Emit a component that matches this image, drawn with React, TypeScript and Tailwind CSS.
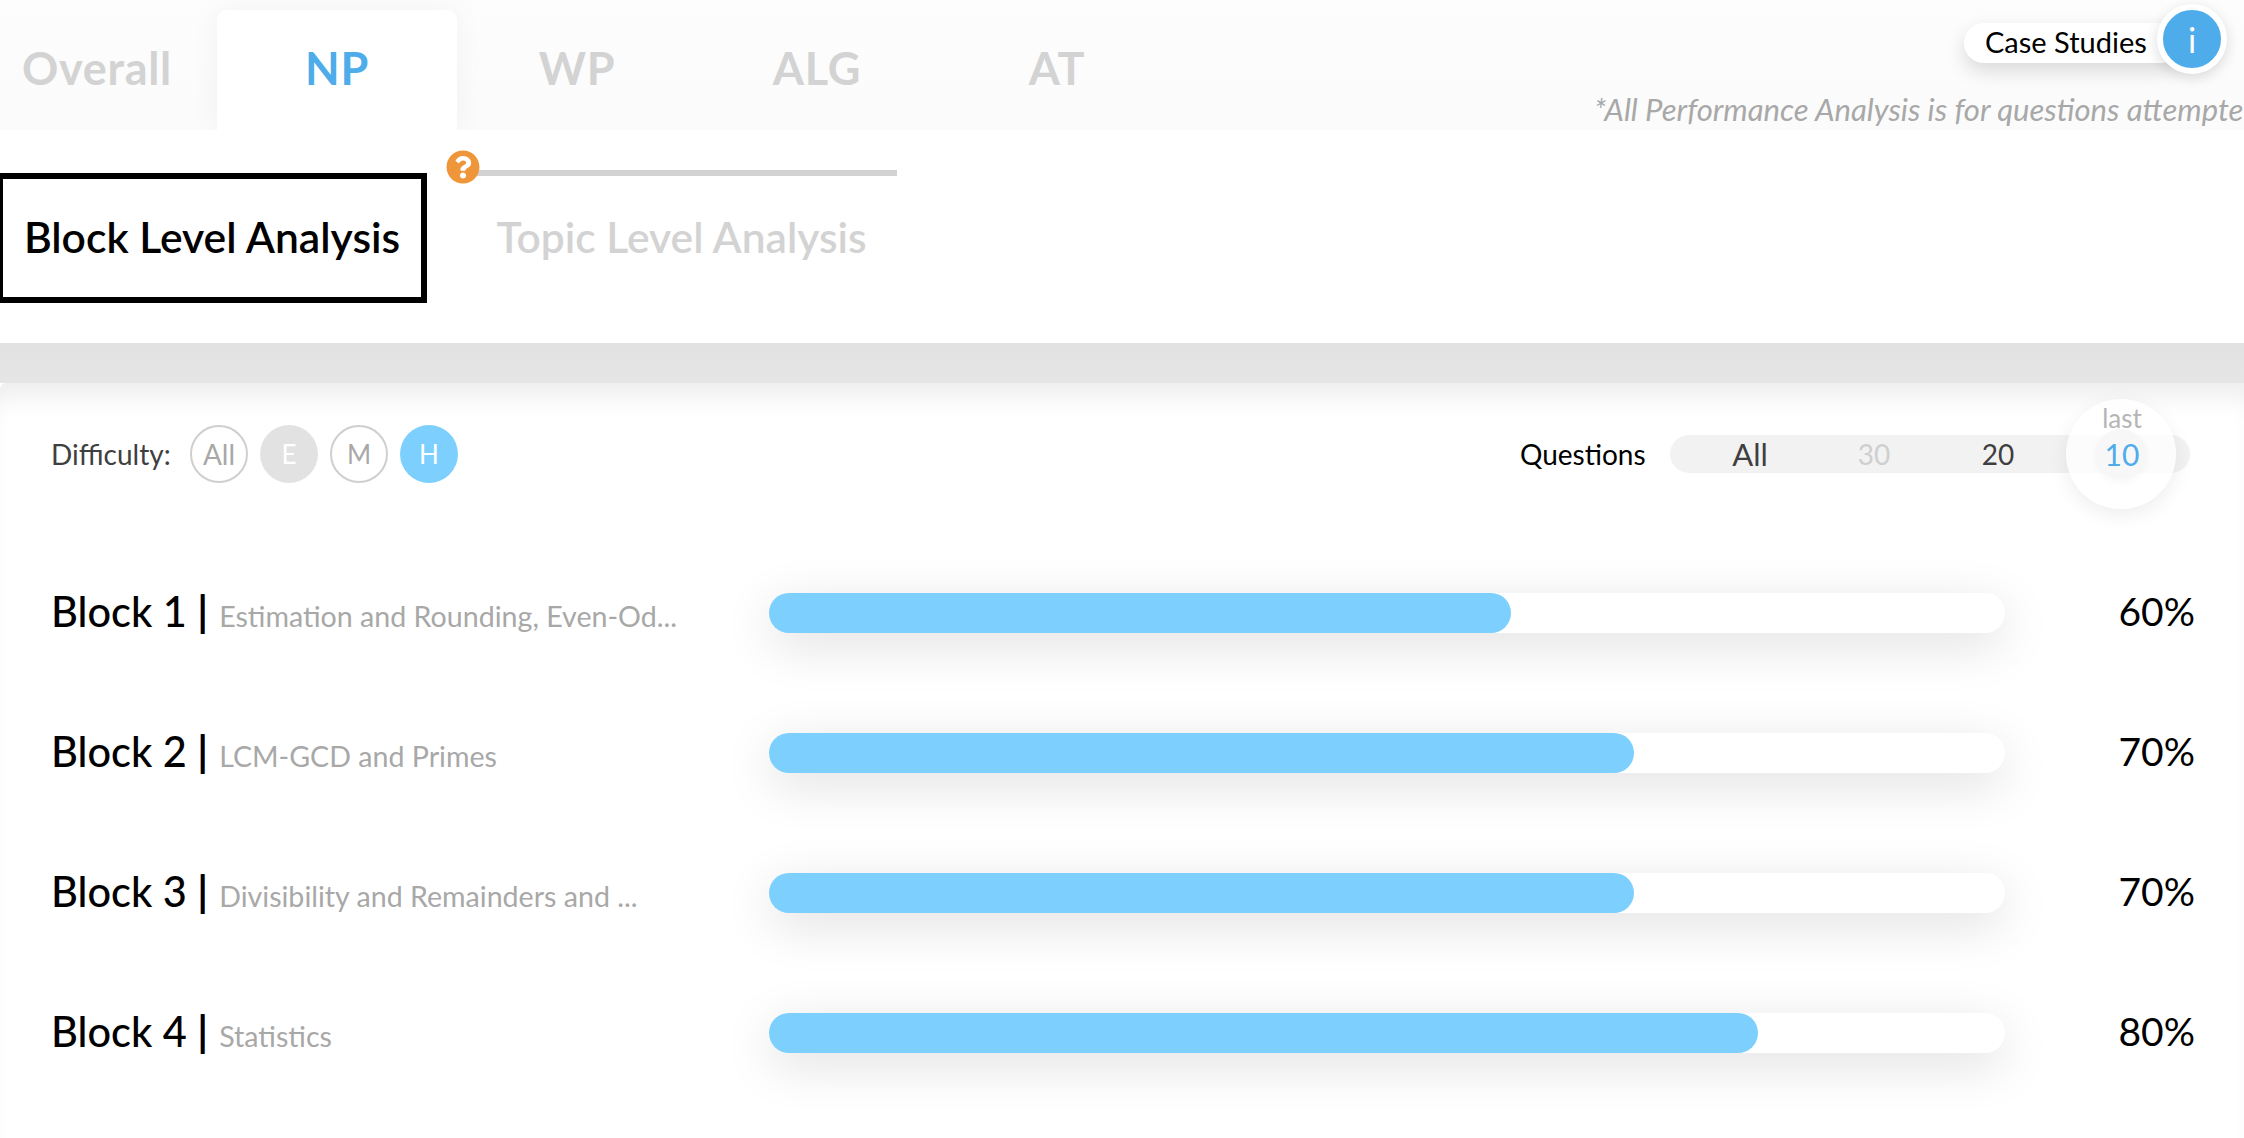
import React from "react";
import { FaQuestionCircle } from "react-icons/fa";

const tabs = ["Overall", "NP", "WP", "ALG", "AT"];
const blocks = [
  { name: "Block 1", topic: "Estimation and Rounding, Even-Od...", value: 60 },
  { name: "Block 2", topic: "LCM-GCD and Primes", value: 70 },
  { name: "Block 3", topic: "Divisibility and Remainders and ...", value: 70 },
  { name: "Block 4", topic: "Statistics", value: 80 },
];

export default function App() {
  return (
    <div className="flex h-[1138px] w-[2244px] flex-col overflow-hidden bg-white font-['Lato',sans-serif]">
      <header className="flex h-[130px] shrink-0 bg-gradient-to-b from-[#fdfdfd] to-[#fbfbfb]">
        <nav className="-ml-[23px] flex shrink-0 pt-[10px]">
          {tabs.map((t) => (
            <div
              key={t}
              className={
                t === "NP"
                  ? "flex h-[120px] w-[240px] items-center justify-center rounded-t-[10px] bg-white pb-[3px] text-[45px] font-bold tracking-[0.7px] text-[#4eacea] shadow-[0_0_30px_rgba(0,0,0,0.05)]"
                  : "flex h-[120px] w-[240px] items-center justify-center pb-[3px] text-[45px] font-bold tracking-[0.7px] text-[#d3d3d3]"
              }
            >
              {t}
            </div>
          ))}
        </nav>
        <div className="relative min-w-0 flex-1">
          <div className="flex justify-end pr-[17px] pt-[4px]">
            <div className="flex items-center">
              <div className="-mr-[24px] mt-[8px] flex h-[40px] w-[217px] items-center rounded-full bg-white pb-[2px] pl-[21px] text-[29px] text-black shadow-[0_8px_20px_rgba(0,0,0,0.14)]">
                Case Studies
              </div>
              <div className="relative flex h-[70px] w-[70px] items-center justify-center rounded-full border-[6px] border-white bg-[#4eaceb] text-[34px] text-white shadow-[0_4px_14px_rgba(0,0,0,0.14)]">
                i
              </div>
            </div>
          </div>
          <p className="ml-[417px] mt-[15px] whitespace-nowrap text-[31px] leading-[40px] italic text-[#a8a8a8]">
            *All Performance Analysis is for questions attempted
          </p>
        </div>
      </header>

      <section className="flex h-[213px] shrink-0 items-start bg-white pt-[43px]">
        <div className="-ml-[3px] flex h-[130px] w-[430px] shrink-0 items-center justify-center border-[6px] border-black bg-white pb-[3px] text-[42.6px] font-semibold text-black">
          Block Level Analysis
        </div>
        <div className="relative ml-[36px] h-[130px] w-[434px] shrink-0">
          <div className="absolute -top-[3px] left-[12px] right-0 h-[6px] bg-[#d2d2d2]" />
          <FaQuestionCircle className="absolute -left-[17px] -top-[23px] h-[34px] w-[34px] text-[#f0963a]" />
          <div className="flex h-full items-center justify-center pb-[3px] pl-[3px] text-[42.5px] font-semibold text-[#d3d3d3]">
            Topic Level Analysis
          </div>
        </div>
      </section>

      <div className="h-[40px] shrink-0 bg-gradient-to-b from-[#e2e2e2] to-[#e5e5e5]" />

      <main className="flex-1 rounded-tl-[6px] bg-white pt-[16px] shadow-[inset_0_26px_24px_-12px_rgba(0,0,0,0.07)]">
        <div className="flex h-[110px] items-center pl-[51px]">
          <span className="w-[139px] text-[28px] text-[#3f3f3f]">Difficulty:</span>
          <div className="flex gap-[12px]">
            <div className="flex h-[58px] w-[58px] items-center justify-center rounded-full border-2 border-[#cfcfcf] text-[28px] text-[#a8a8a8]">All</div>
            <div className="flex h-[58px] w-[58px] items-center justify-center rounded-full bg-[#e2e2e2] text-[26px] text-white">E</div>
            <div className="flex h-[58px] w-[58px] items-center justify-center rounded-full border-2 border-[#cfcfcf] text-[26px] text-[#a8a8a8]">M</div>
            <div className="flex h-[58px] w-[58px] items-center justify-center rounded-full bg-[#7dd0fd] text-[26px] text-white">H</div>
          </div>
          <span className="ml-auto w-[150px] text-[28px] text-black">Questions</span>
          <div className="mr-[54px] flex h-[38px] w-[520px] items-center rounded-full bg-[#f2f2f2] pl-[18px] text-[28px]">
            <span className="w-[124px] text-center text-[31px] text-[#3f3f3f]">All</span>
            <span className="w-[124px] text-center text-[#cfcfcf]">30</span>
            <span className="w-[124px] text-center text-[#3f3f3f]">20</span>
            <span className="relative flex w-[124px] items-center justify-center text-[30px] text-[#4eaceb]">
              <span className="absolute left-[6px] top-1/2 h-[110px] w-[110px] -translate-y-1/2 rounded-full bg-white/75 shadow-[0_6px_20px_rgba(0,0,0,0.07)]" />
              <span className="absolute left-[36px] top-1/2 h-[50px] w-[50px] -translate-y-1/2 rounded-full bg-[#f7f7f7] shadow-[0_3px_8px_rgba(0,0,0,0.04)]" />
              <span className="absolute left-0 right-0 -top-[33px] text-center text-[26px] text-[#b5b5b5]">last</span>
              <span className="relative">10</span>
            </span>
          </div>
        </div>

        <div className="mt-[84px] flex flex-col gap-[100px]">
          {blocks.map((b) => (
            <div key={b.name} className="flex h-[40px] items-center">
              <div className="flex w-[769px] shrink-0 items-baseline pb-[3px] pl-[51px] whitespace-nowrap">
                <span className="text-[41.5px] font-medium text-black">
                  {b.name} <span className="font-bold">|</span>
                </span>
                <span className="ml-[11px] text-[28.6px] text-[#a8a8a8]">{b.topic}</span>
              </div>
              <div className="h-[40px] w-[1236px] shrink-0 rounded-full bg-white shadow-[0_12px_50px_rgba(0,0,0,0.13)]">
                <div className="h-full rounded-full bg-[#7dd0fd]" style={{ width: `${b.value}%` }} />
              </div>
              <div className="flex-1 pb-[4px] pr-[49px] text-right text-[39px] text-black">{b.value}%</div>
            </div>
          ))}
        </div>
      </main>
    </div>
  );
}
